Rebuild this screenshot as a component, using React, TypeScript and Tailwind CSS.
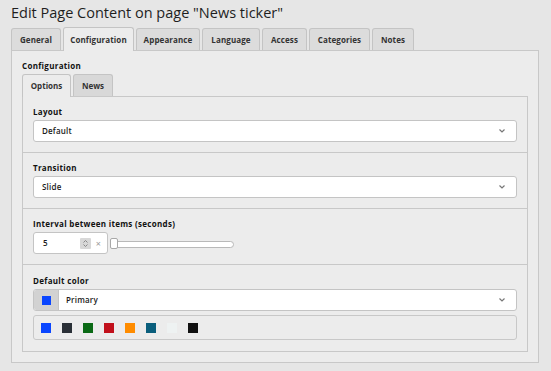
import React from "react";

const tabs: [string, string][] = [
  ["General", "w-[50px]"],
  ["Configuration", "w-[71px]"],
  ["Appearance", "w-[64px]"],
  ["Language", "w-[58px]"],
  ["Access", "w-[45px]"],
  ["Categories", "w-[61px]"],
  ["Notes", "w-[42px]"],
];
const swatches = ["#0a46ff", "#2a3037", "#0b6a16", "#c1101b", "#ff8c00", "#0a5e7c", "#eef2f2", "#111111"];

function Chevron() {
  return (
    <svg width="8" height="6" viewBox="0 0 8 6" className="shrink-0">
      <path d="M1.5 1.5 L4 4 L6.5 1.5" fill="none" stroke="#777" strokeWidth="1.2" />
    </svg>
  );
}

function Select({ value }: { value: string }) {
  return (
    <div className="flex h-[22px] items-center justify-between rounded-[3px] border border-[#c4c4c4] bg-white pl-[8px] pr-[10px]">
      <span className="text-[8px] font-semibold tracking-[0.2px] text-[#1a1a1a]">{value}</span>
      <Chevron />
    </div>
  );
}

function Label({ children }: { children: React.ReactNode }) {
  return (
    <div className="mb-[2px] h-[12px] text-[8px] font-bold leading-[12px] tracking-[0.3px] text-[#111]">{children}</div>
  );
}

export default function App() {
  return (
    <div
      className="min-h-[371px] w-[551px] bg-[#e6e6e6] text-[#222]"
      style={{ fontFamily: '"Open Sans", "Noto Sans", sans-serif' }}
    >
      <div className="h-[28px] px-[11px] pt-[3px] text-[14.5px] leading-[20px] text-[#1e1e1e]">
        Edit Page Content on page "News ticker"
      </div>
      <div className="relative z-10 flex h-[22px] gap-[2px] pl-[11px]">
        {tabs.map(([t, w]) => {
          const active = t === "Configuration";
          return (
            <div
              key={t}
              className={
                (active
                  ? "-mt-[1px] h-[24px] bg-[#ececec] "
                  : "h-[22px] bg-[#dcdcdc] ") +
                w +
                " flex items-center justify-center rounded-t-[3px] border border-b-0 border-[#c4c4c4] text-[8px] font-bold tracking-[0.1px] text-[#333]"
              }
            >
              {t}
            </div>
          );
        })}
      </div>
      <div className="mx-[11px] w-[528px] border border-[#c8c8c8] bg-[#ececec] px-[10px] pb-[10px]">
        <div className="h-[23px] pt-[9px] text-[8px] font-bold leading-[12px] tracking-[0.3px] text-[#111]">Configuration</div>
        <div className="relative z-10 flex h-[22px] gap-[2px]">
          <div className="flex h-[23px] w-[49px] items-center justify-center rounded-t-[3px] border border-b-0 border-[#c4c4c4] bg-[#ececec] text-[8px] font-bold text-[#333]">
            Options
          </div>
          <div className="flex h-[22px] w-[40px] items-center justify-center rounded-t-[3px] border border-b-0 border-[#c4c4c4] bg-[#d8d8d8] text-[8px] font-bold text-[#333]">
            News
          </div>
        </div>
        <div className="border border-[#c8c8c8] bg-[#ececec]">
          <div className="border-b border-[#c8c8c8] px-[10px] pt-[9px] pb-[10px]">
            <Label>Layout</Label>
            <Select value="Default" />
          </div>
          <div className="border-b border-[#c8c8c8] px-[10px] pt-[9px] pb-[10px]">
            <Label>Transition</Label>
            <Select value="Slide" />
          </div>
          <div className="border-b border-[#c8c8c8] px-[10px] pt-[9px] pb-[10px]">
            <Label>Interval between items (seconds)</Label>
            <div className="flex items-center">
              <div className="flex h-[22px] w-[75px] items-center rounded-[3px] border border-[#c4c4c4] bg-white pl-[9px]">
                <span className="flex-1 text-[8px] font-semibold text-[#1a1a1a]">5</span>
                <div className="flex h-[11px] w-[11px] items-center justify-center rounded-[1px] bg-[#d8d8d8]">
                  <svg width="7" height="9" viewBox="0 0 7 9">
                    <path d="M1.5 3.5 L3.5 1.5 L5.5 3.5 M1.5 5.5 L3.5 7.5 L5.5 5.5" fill="none" stroke="#888" strokeWidth="1" />
                  </svg>
                </div>
                <span className="ml-[5px] mr-[6px] text-[9px] leading-none text-[#999]">×</span>
              </div>
              <div className="relative ml-[2px] h-[11px] w-[124px]">
                <div className="absolute left-0 right-0 top-[3px] h-[7px] rounded-full border border-[#b8b8b8] bg-white" />
                <div className="absolute left-0 top-0 h-[11px] w-[8px] rounded-[2px] border border-[#a8a8a8] bg-white" />
              </div>
            </div>
          </div>
          <div className="px-[10px] pt-[10px] pb-[11px]">
            <Label>Default color</Label>
            <div className="flex h-[22px] items-center rounded-[3px] border border-[#c4c4c4] bg-white">
              <div className="flex h-full w-[25px] items-center justify-center rounded-l-[2px] border-r border-[#c4c4c4] bg-[#d2d2d2]">
                <div className="h-[9px] w-[9px] bg-[#0a46ff]" />
              </div>
              <span className="ml-[7px] flex-1 text-[8px] font-semibold tracking-[0.2px] text-[#1a1a1a]">Primary</span>
              <div className="mr-[10px]">
                <Chevron />
              </div>
            </div>
            <div className="mt-[4px] flex h-[25px] items-center gap-[11px] rounded-[3px] border border-[#c8c8c8] bg-[#ececec] pl-[7px]">
              {swatches.map((c) => (
                <div key={c} className="h-[10px] w-[10px]" style={{ backgroundColor: c }} />
              ))}
            </div>
          </div>
        </div>
      </div>
    </div>
  );
}
